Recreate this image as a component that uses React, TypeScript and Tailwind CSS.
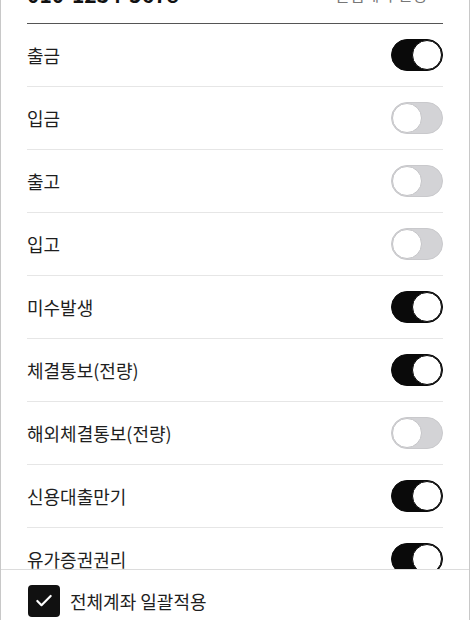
import React, { useState } from "react";
import { Check, ChevronRight } from "lucide-react";

const items = [
  { id: "withdraw", label: "출금", on: true },
  { id: "deposit", label: "입금", on: false },
  { id: "out", label: "출고", on: false },
  { id: "in", label: "입고", on: false },
  { id: "unpaid", label: "미수발생", on: true },
  { id: "fill", label: "체결통보(전량)", on: true },
  { id: "foreignFill", label: "해외체결통보(전량)", on: false },
  { id: "credit", label: "신용대출만기", on: true },
  { id: "rights", label: "유가증권권리", on: true },
];

const Toggle = ({ on, onClick }: { on: boolean; onClick: () => void }) => (
  <button
    onClick={onClick}
    className={`relative w-[52px] h-[32px] rounded-full border shrink-0 ${
      on ? "bg-[#0a0a0a] border-[#0a0a0a]" : "bg-[#d3d3d6] border-[#c9c9cc]"
    }`}
  >
    <span
      className={`absolute top-[0px] w-[30px] h-[30px] rounded-full bg-white border ${
        on ? "right-[0px] border-[#0a0a0a]" : "left-[0px] border-[#c4c4c7]"
      }`}
    />
  </button>
);

export default function App() {
  const [state, setState] = useState(items.map((i) => i.on));
  const [all, setAll] = useState(true);

  return (
    <div
      className="w-[470px] h-[620px] bg-white border-x border-[#c8c8c8] flex flex-col overflow-hidden"
      style={{ fontFamily: '"Noto Sans CJK KR", "Noto Sans", sans-serif' }}
    >
      <div className="flex-1 min-h-0 overflow-hidden px-[26px]">
        <div className="-mt-[18px] flex items-center justify-between pb-[17px] border-b border-[#555555]">
          <span className="text-[21px] leading-[24px] font-bold text-[#111]">010-1234-5678</span>
          <span className="flex items-center text-[16px] leading-[24px] text-[#777]">
            알림계좌 변경
            <ChevronRight size={16} strokeWidth={1.5} />
          </span>
        </div>
        {items.map((item, i) => (
          <div
            key={item.id}
            className="h-[63px] flex items-center justify-between border-b border-[#e6e6e6]"
          >
            <span className="text-[18px] text-[#1e1e1e]">{item.label}</span>
            <Toggle
              on={state[i]}
              onClick={() => setState((s) => s.map((v, j) => (j === i ? !v : v)))}
            />
          </div>
        ))}
      </div>

      <div className="h-[51px] shrink-0 border-t border-[#dcdcdc] px-[27px] pt-[15px] flex items-start gap-[10px]">
        <button
          onClick={() => setAll(!all)}
          className={`w-[32px] h-[32px] rounded-[4px] flex items-center justify-center ${
            all ? "bg-[#111]" : "bg-white border border-[#ccc]"
          }`}
        >
          {all && <Check size={20} strokeWidth={2.6} className="text-white" />}
        </button>
        <span className="text-[18px] leading-[32px] text-[#1e1e1e]">전체계좌 일괄적용</span>
      </div>
    </div>
  );
}
